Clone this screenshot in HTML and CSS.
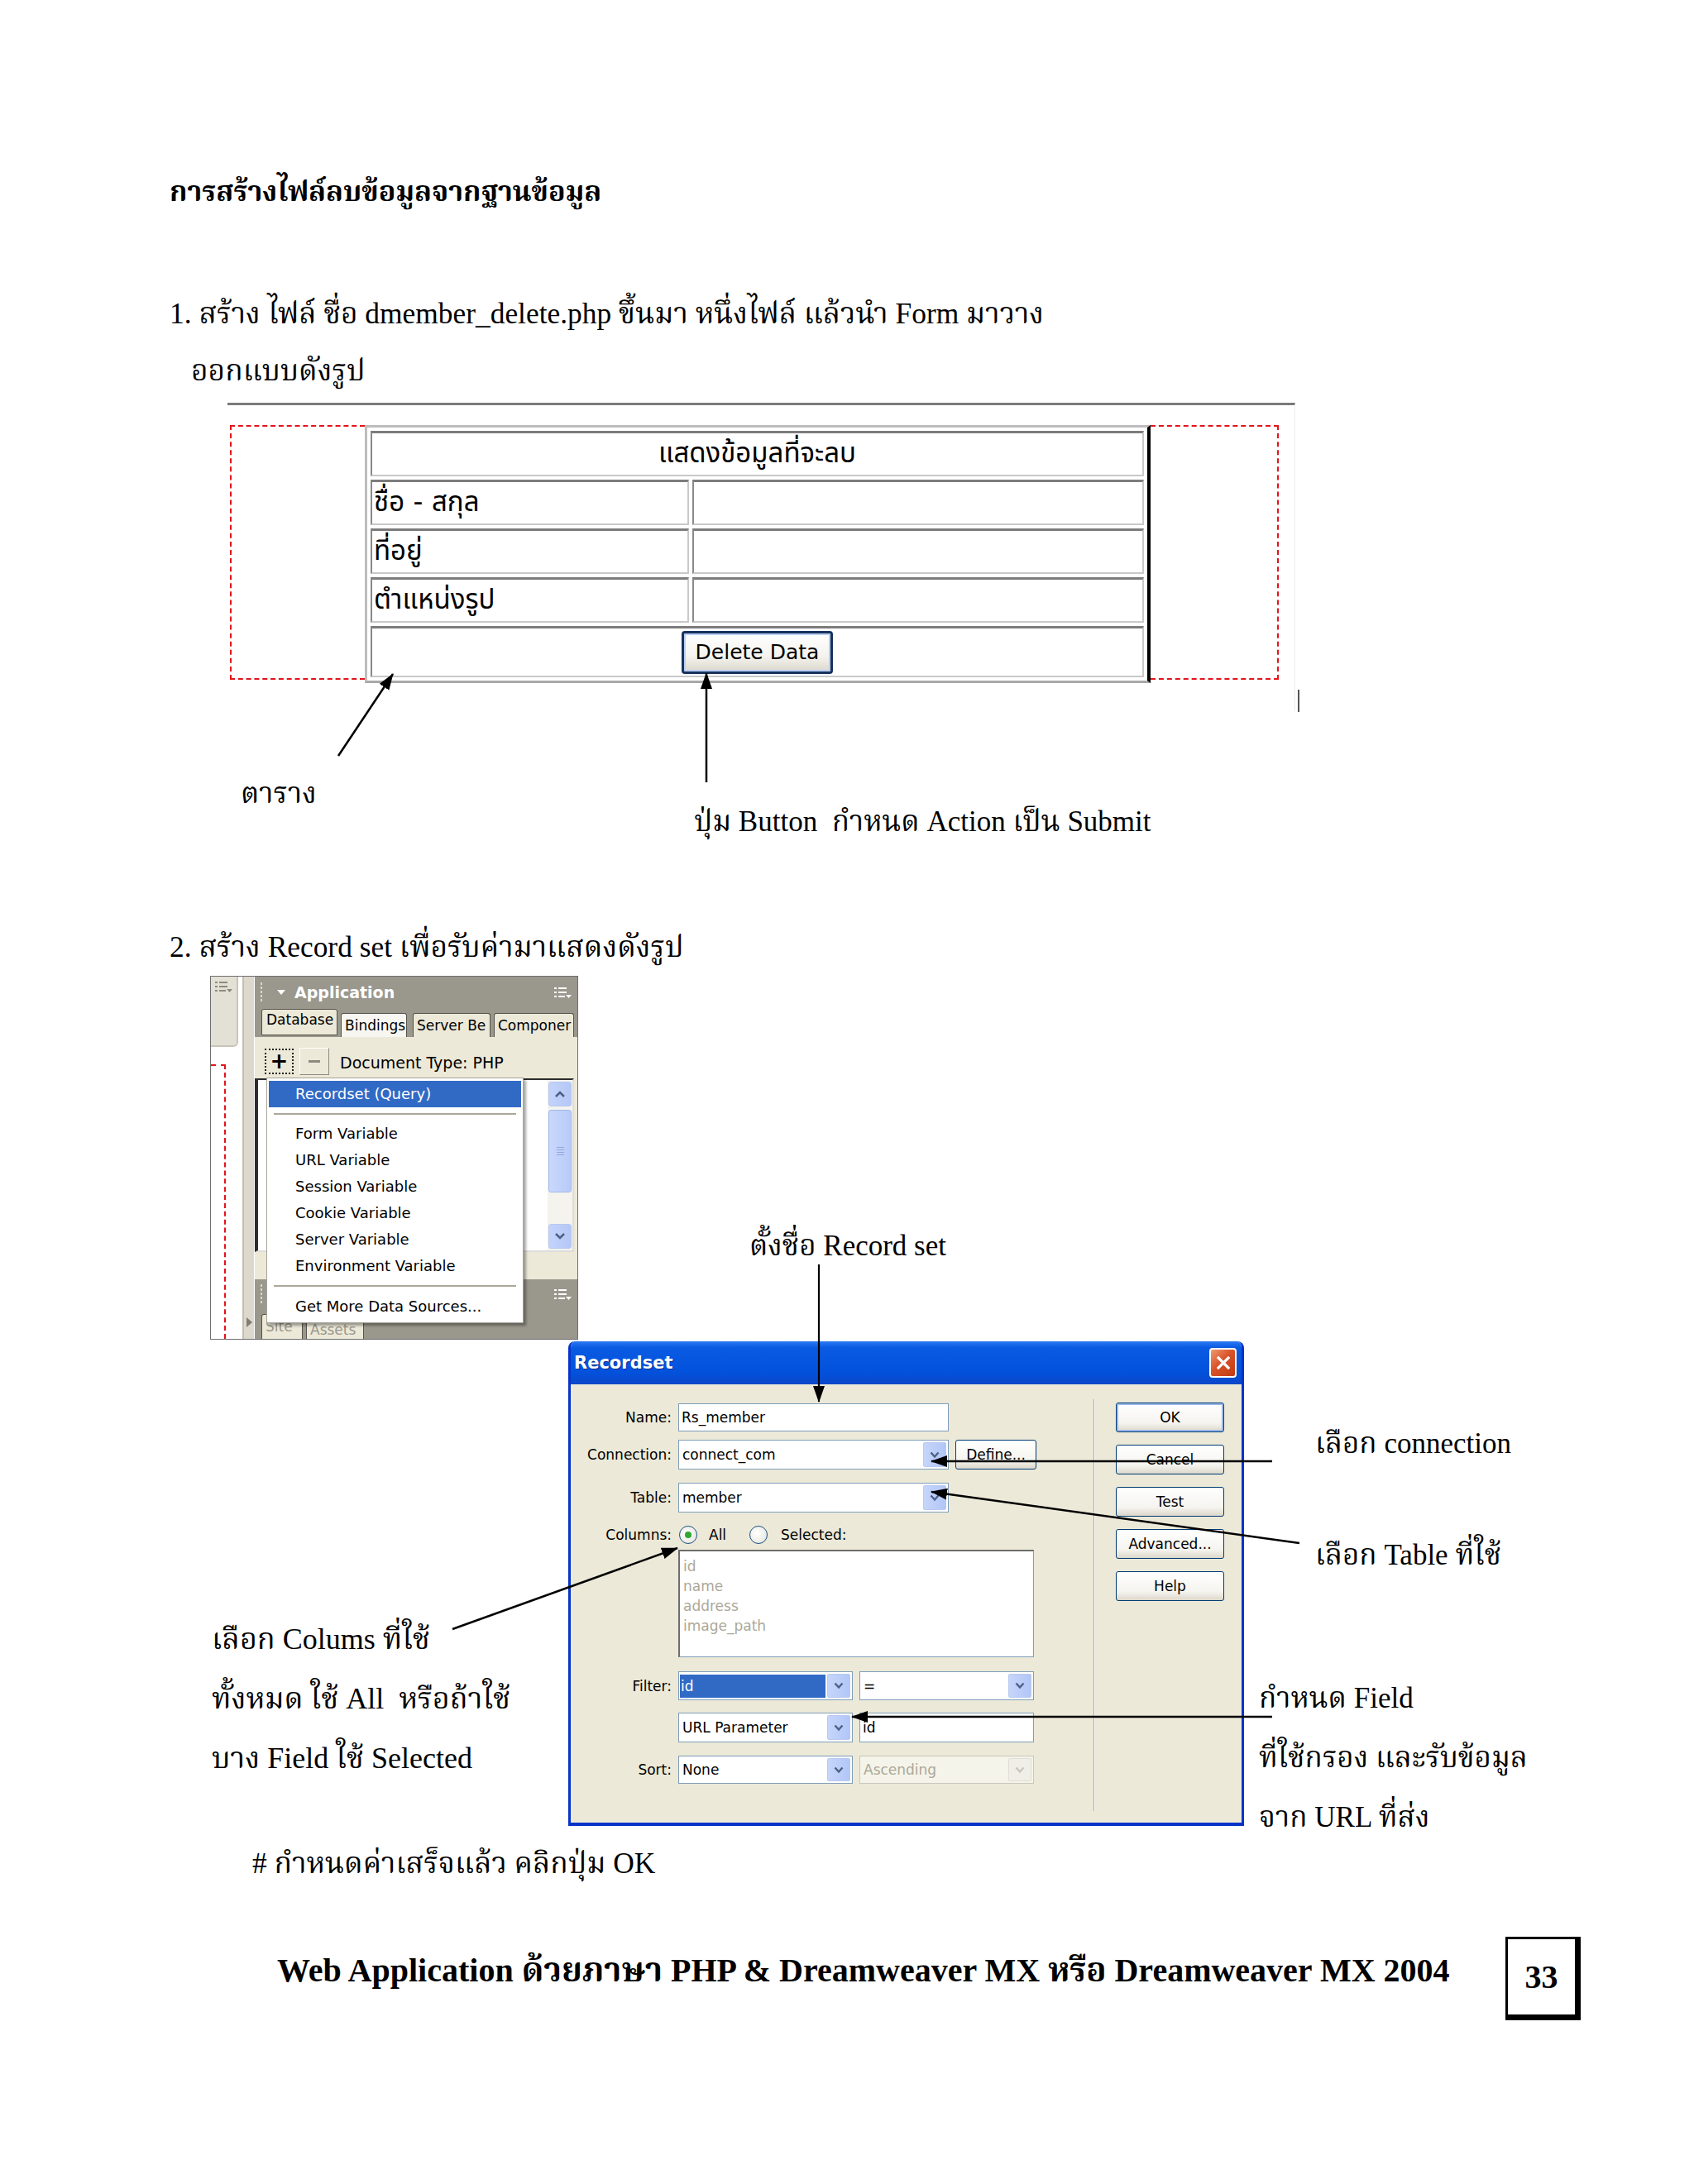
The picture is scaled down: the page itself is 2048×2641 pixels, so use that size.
FILE: index.html
```html
<!DOCTYPE html>
<html lang="th">
<head>
<meta charset="utf-8">
<title>การสร้างไฟล์ลบข้อมูลจากฐานข้อมูล</title>
<link rel="stylesheet" href="styles.css">
</head>
<body>
<div class="page">
  <h1 class="title">การสร้างไฟล์ลบข้อมูลจากฐานข้อมูล</h1>
  <p class="step">1. สร้าง ไฟล์ ชื่อ dmember_delete.php ขึ้นมา หนึ่งไฟล์ แล้วนำ Form มาวาง</p>
  <p class="step cont">ออกแบบดังรูป</p>

  <div class="fig fig1">
    <div class="shot1">
      <div class="redbox">
        <div class="dash dash-l"></div>
        <table class="dtable">
          <tr><td colspan="2" class="head">แสดงข้อมูลที่จะลบ</td></tr>
          <tr><td class="c1">ชื่อ - สกุล</td><td></td></tr>
          <tr><td class="c1">ที่อยู่</td><td></td></tr>
          <tr><td class="c1">ตำแหน่งรูป</td><td></td></tr>
          <tr class="last"><td colspan="2"><span class="xpbtn">Delete Data</span></td></tr>
        </table>
        <div class="dash dash-r"></div>
      </div>
    </div>
    <svg class="overlay" width="1400" height="543" viewBox="0 0 1400 543">
      <defs>
        <marker id="ah1" markerUnits="userSpaceOnUse" markerWidth="20" markerHeight="16" refX="19" refY="8" orient="auto">
          <path d="M0,1 L20,8 L0,15 Z" fill="#000"/>
        </marker>
      </defs>
      <line x1="204" y1="427" x2="270" y2="328" stroke="#000" stroke-width="2.5" marker-end="url(#ah1)"/>
      <line x1="649" y1="459" x2="649" y2="327" stroke="#000" stroke-width="2.5" marker-end="url(#ah1)"/>
    </svg>
    <span class="note n-table">ตาราง</span>
    <span class="note n-btn">ปุ่ม Button&nbsp; กำหนด Action เป็น Submit</span>
  </div>

  <p class="step step2">2. สร้าง Record set เพื่อรับค่ามาแสดงดังรูป</p>

  <div class="fig fig2">
    <div class="dw">
      <div class="dw-left">
        <div class="dw-doc">
          <div class="dw-doctab">
            <svg class="mico" width="22" height="16" viewBox="0 0 22 16"><rect x="1" y="2" width="3" height="2"/><rect x="6" y="2" width="10" height="2"/><rect x="1" y="7" width="3" height="2"/><rect x="6" y="7" width="10" height="2"/><rect x="1" y="12" width="3" height="2"/><rect x="6" y="12" width="8" height="2"/><path d="M15 11 h7 l-3.5 4z"/></svg>
          </div>
          <div class="dw-docpage"></div>
        </div>
        <div class="dw-split"><span class="split-tri"></span></div>
      </div>
      <div class="dw-app">
        <div class="app-bar">
          <span class="grip"></span>
          <span class="tri"></span>
          <span class="app-name">Application</span>
          <svg class="mico" width="22" height="16" viewBox="0 0 22 16"><rect x="1" y="2" width="3" height="2"/><rect x="6" y="2" width="10" height="2"/><rect x="1" y="7" width="3" height="2"/><rect x="6" y="7" width="10" height="2"/><rect x="1" y="12" width="3" height="2"/><rect x="6" y="12" width="8" height="2"/><path d="M15 11 h7 l-3.5 4z"/></svg>
        </div>
        <div class="app-tabs">
          <span class="tab t-db">Database</span>
          <span class="tab t-bind">Bindings</span>
          <span class="tab t-srv">Server Be</span>
          <span class="tab t-cmp">Componer</span>
        </div>
        <div class="app-body">
          <div class="app-tools">
            <span class="tb plus">+</span>
            <span class="tb minus"></span>
            <span class="doctype">Document Type: PHP</span>
          </div>
          <div class="app-list">
            <div class="sbar">
              <span class="sbtn"><svg width="14" height="10" viewBox="0 0 14 10"><path d="M2 8 L7 3 L12 8" fill="none" stroke="#4d6185" stroke-width="2.5"/></svg></span>
              <span class="sthumb"><i></i><i></i><i></i><i></i></span>
              <span class="strack"></span>
              <span class="sbtn"><svg width="14" height="10" viewBox="0 0 14 10"><path d="M2 2 L7 7 L12 2" fill="none" stroke="#4d6185" stroke-width="2.5"/></svg></span>
            </div>
          </div>
        </div>
        <div class="app-bar bar2">
          <span class="grip"></span>
          <span class="bar-fill"></span>
          <svg class="mico" width="22" height="16" viewBox="0 0 22 16"><rect x="1" y="2" width="3" height="2"/><rect x="6" y="2" width="10" height="2"/><rect x="1" y="7" width="3" height="2"/><rect x="6" y="7" width="10" height="2"/><rect x="1" y="12" width="3" height="2"/><rect x="6" y="12" width="8" height="2"/><path d="M15 11 h7 l-3.5 4z"/></svg>
        </div>
        <div class="app-tabs tabs2">
          <span class="tab t-low">Site</span>
          <span class="tab t-low2">Assets</span>
        </div>
      </div>
      <div class="menu">
        <div class="mi hi">Recordset (Query)</div>
        <div class="msep"></div>
        <div class="mi">Form Variable</div>
        <div class="mi">URL Variable</div>
        <div class="mi">Session Variable</div>
        <div class="mi">Cookie Variable</div>
        <div class="mi">Server Variable</div>
        <div class="mi">Environment Variable</div>
        <div class="msep"></div>
        <div class="mi more">Get More Data Sources...</div>
      </div>
    </div>

    <div class="dlg">
      <div class="dlg-title">
        <span class="dlg-name">Recordset</span>
        <span class="dlg-close"><svg width="20" height="20" viewBox="0 0 20 20"><path d="M4 4 L16 16 M16 4 L4 16" stroke="#fff" stroke-width="3.2" stroke-linecap="square"/></svg></span>
      </div>
      <div class="dlg-body">
        <div class="form">
          <div class="row r-name"><span class="lbl">Name:</span><span class="inp w327">Rs_member</span></div>
          <div class="row r-conn"><span class="lbl">Connection:</span><span class="sel w327"><span class="val">connect_com</span><span class="drop"><svg width="12" height="9" viewBox="0 0 12 9"><path d="M1.5 1.5 L6 6.5 L10.5 1.5" fill="none" stroke="#4d6185" stroke-width="2.4"/></svg></span></span><span class="pbtn define">Define...</span></div>
          <div class="row r-table"><span class="lbl">Table:</span><span class="sel w327"><span class="val">member</span><span class="drop"><svg width="12" height="9" viewBox="0 0 12 9"><path d="M1.5 1.5 L6 6.5 L10.5 1.5" fill="none" stroke="#4d6185" stroke-width="2.4"/></svg></span></span></div>
          <div class="row r-cols"><span class="lbl">Columns:</span><span class="radio on"></span><span class="rtxt">All</span><span class="radio"></span><span class="rtxt rtxt2">Selected:</span></div>
          <div class="row r-list"><span class="lbl"></span><div class="lbox"><div>id</div><div>name</div><div>address</div><div>image_path</div></div></div>
          <div class="row r-filter"><span class="lbl">Filter:</span><span class="sel w211"><span class="val"><span class="hl">id</span></span><span class="drop"><svg width="12" height="9" viewBox="0 0 12 9"><path d="M1.5 1.5 L6 6.5 L10.5 1.5" fill="none" stroke="#4d6185" stroke-width="2.4"/></svg></span></span><span class="sel w211"><span class="val">=</span><span class="drop"><svg width="12" height="9" viewBox="0 0 12 9"><path d="M1.5 1.5 L6 6.5 L10.5 1.5" fill="none" stroke="#4d6185" stroke-width="2.4"/></svg></span></span></div>
          <div class="row r-url"><span class="lbl"></span><span class="sel w211"><span class="val">URL Parameter</span><span class="drop"><svg width="12" height="9" viewBox="0 0 12 9"><path d="M1.5 1.5 L6 6.5 L10.5 1.5" fill="none" stroke="#4d6185" stroke-width="2.4"/></svg></span></span><span class="inp w211">id</span></div>
          <div class="row r-sort"><span class="lbl">Sort:</span><span class="sel w211"><span class="val">None</span><span class="drop"><svg width="12" height="9" viewBox="0 0 12 9"><path d="M1.5 1.5 L6 6.5 L10.5 1.5" fill="none" stroke="#4d6185" stroke-width="2.4"/></svg></span></span><span class="sel w211 off"><span class="val">Ascending</span><span class="drop"><svg width="12" height="9" viewBox="0 0 12 9"><path d="M1.5 1.5 L6 6.5 L10.5 1.5" fill="none" stroke="#c9c7ba" stroke-width="2.4"/></svg></span></span></div>
        </div>
        <div class="vsep"></div>
        <div class="btns">
          <span class="pbtn dflt">OK</span>
          <span class="pbtn">Cancel</span>
          <span class="pbtn">Test</span>
          <span class="pbtn">Advanced...</span>
          <span class="pbtn">Help</span>
        </div>
      </div>
    </div>

    <svg class="overlay ov2" width="1500" height="1030" viewBox="0 0 1500 1030">
      <defs>
        <marker id="ah2" markerUnits="userSpaceOnUse" markerWidth="20" markerHeight="16" refX="19" refY="8" orient="auto">
          <path d="M0,1 L20,8 L0,15 Z" fill="#000"/>
        </marker>
      </defs>
      <line x1="785" y1="349" x2="785" y2="515" stroke="#000" stroke-width="2.2" marker-end="url(#ah2)"/>
      <line x1="1333" y1="587" x2="921" y2="587" stroke="#000" stroke-width="2.5" marker-end="url(#ah2)"/>
      <line x1="1366" y1="686" x2="921" y2="624" stroke="#000" stroke-width="2.5" marker-end="url(#ah2)"/>
      <line x1="342" y1="790" x2="614" y2="692" stroke="#000" stroke-width="2.5" marker-end="url(#ah2)"/>
      <line x1="1333" y1="896" x2="825" y2="896" stroke="#000" stroke-width="2.5" marker-end="url(#ah2)"/>
    </svg>
    <span class="note n-name">ตั้งชื่อ Record set</span>
    <span class="note rn n-conn">เลือก connection</span>
    <span class="note rn n-tbl">เลือก Table ที่ใช้</span>
    <div class="note nblock n-cols">เลือก Colums ที่ใช้<br>ทั้งหมด ใช้ All&nbsp; หรือถ้าใช้<br>บาง Field ใช้ Selected</div>
    <div class="note nblock rn n-field">กำหนด Field<br>ที่ใช้กรอง และรับข้อมูล<br>จาก URL ที่ส่ง</div>
  </div>

  <p class="hint"># กำหนดค่าเสร็จแล้ว คลิกปุ่ม OK</p>

  <footer class="foot">
    <span class="foot-text">Web Application ด้วยภาษา PHP &amp; Dreamweaver MX หรือ Dreamweaver MX 2004</span>
    <span class="pnum">33</span>
  </footer>
</div>
</body>
</html>
```

FILE: styles.css
```css
* { box-sizing: border-box; }
html, body { margin: 0; background: #fff; }
body {
  width: 2048px;
  min-height: 2641px;
  color: #000;
  font-family: "Liberation Serif", "Noto Serif Thai", "Noto Sans Thai", "Garuda", "Norasi", "Loma", serif;
}
.page { padding: 202px 0 0 205px; }

.title { margin: 0; height: 60px; line-height: 60px; font-size: 34px; font-weight: bold; white-space: nowrap; }
.step { margin: 87px 0 0; height: 60px; line-height: 60px; font-size: 35.4px; white-space: nowrap; }
.cont { margin-top: 9px; padding-left: 26px; }
.step2 { margin-top: 85px; }

.fig { position: relative; }
.overlay { position: absolute; left: 0; top: 0; pointer-events: none; z-index: 5; }
.note { position: absolute; white-space: nowrap; font-size: 35px; line-height: 60px; z-index: 6; }

/* ---------- figure 1 ---------- */
.fig1 { margin-top: 9px; height: 543px; }
.shot1 {
  position: relative;
  margin-left: 70px;
  width: 1291px;
  height: 373px;
  border-top: 3px solid #7a7a7a;
  border-right: 1px solid #ececec;
  padding: 24px 0 0 3px;
}
.shot1::after {
  content: "";
  position: absolute;
  right: -6px;
  top: 344px;
  width: 2px;
  height: 27px;
  background: #555;
}
.redbox { display: flex; width: 1268px; height: 308px; }
.dash { border: 2px dashed #e3141b; }
.dash-l { width: 163px; border-right: 0; }
.dash-r { width: 155px; border-left: 0; }
.dtable {
  width: 950px;
  height: 308px;
  border-collapse: separate;
  border-spacing: 4px;
  border-top: 3px solid #bdbdbd;
  border-left: 3px solid #bdbdbd;
  border-bottom: 3px solid #a8a8a8;
  border-right: 4px solid #000;
  background: #fff;
  font-family: "DejaVu Sans", "Noto Sans Thai", "Loma", "Garuda", sans-serif;
  font-size: 33px;
}
.dtable td {
  height: 54px;
  padding: 0 2px;
  border-top: 3px solid #7c7c7c;
  border-left: 2px solid #8a8a8a;
  border-bottom: 2px solid #c9c9c9;
  border-right: 2px solid #c9c9c9;
}
.dtable .c1 { width: 385px; }
.dtable .head { text-align: center; }
.dtable .last td { height: 62px; text-align: center; }
.xpbtn {
  display: inline-flex;
  align-items: center;
  justify-content: center;
  width: 183px;
  height: 52px;
  border: 3px solid #17325c;
  border-radius: 4px;
  background: linear-gradient(#ffffff, #f4f3ee 60%, #dcd8cc);
  box-shadow: inset 0 0 0 2px #b9cff3;
  font-family: "DejaVu Sans", sans-serif;
  font-size: 25px;
  vertical-align: middle;
}
.n-table { left: 86px; top: 443px; }
.n-btn { left: 634px; top: 477px; }

/* ---------- Dreamweaver panel ---------- */
.fig2 { margin-top: 5px; }
.dw {
  position: relative;
  margin-left: 49px;
  width: 445px;
  height: 440px;
  border: 1px solid #6f6f6f;
  display: flex;
  font-family: "DejaVu Sans", sans-serif;
  font-size: 17px;
}
.mico { fill: #fff; flex: none; }
.dw-left { width: 53px; display: flex; }
.dw-doc { width: 38px; display: flex; flex-direction: column; background: #fff; }
.dw-doctab {
  height: 85px;
  width: 33px;
  background: #e3e0d6;
  border-bottom: 2px solid #c9c5b8;
  border-right: 2px solid #c9c5b8;
  border-bottom-right-radius: 6px;
  padding: 4px 0 0 4px;
}
.dw-doctab .mico { fill: #8d8a80; }
.dw-docpage {
  flex: 1;
  margin-top: 21px;
  width: 18px;
  border-top: 2px dashed #e3141b;
  border-right: 2px dashed #e3141b;
}
.dw-split {
  position: relative;
  width: 15px;
  background: #dcd8cc;
  border-left: 2px solid #c2beb1;
  border-right: 1px solid #fff;
}
.split-tri {
  position: absolute;
  left: 3px;
  bottom: 14px;
  border-left: 7px solid #807d74;
  border-top: 6px solid transparent;
  border-bottom: 6px solid transparent;
}
.dw-app { flex: 1; display: flex; flex-direction: column; background: #ece9d8; }
.app-bar {
  height: 37px;
  background: #9a978d;
  display: flex;
  align-items: center;
  padding: 0 7px 0 6px;
  color: #fff;
}
.grip {
  width: 4px;
  height: 26px;
  background-image: radial-gradient(circle, #d9d6cc 1.2px, transparent 1.5px);
  background-size: 4px 5px;
  margin-right: 17px;
}
.tri {
  width: 0; height: 0;
  border-left: 5px solid transparent;
  border-right: 5px solid transparent;
  border-top: 6px solid #fff;
  margin-right: 11px;
}
.app-name { flex: 1; font-weight: bold; font-size: 19px; }
.bar-fill { flex: 1; }
.app-tabs {
  height: 36px;
  background: #9a978d;
  display: flex;
  align-items: flex-end;
  padding-left: 8px;
  gap: 4px;
  overflow: hidden;
}
.tab {
  height: 29px;
  line-height: 28px;
  padding-left: 4px;
  background: #ece9d8;
  border: 1px solid #55534b;
  border-bottom: 0;
  border-radius: 3px 3px 0 0;
  white-space: nowrap;
  overflow: hidden;
  font-size: 17px;
}
.t-db { width: 92px; height: 32px; line-height: 24px; align-self: flex-start; margin-top: 2px; border-bottom: 1px solid #55534b; padding-left: 5px; }
.t-bind { width: 80px; background: #f7f6f1; }
.t-srv { width: 94px; margin-left: 3px; }
.t-cmp { width: 97px; }
.app-body { height: 293px; padding: 12px 4px 0 0; }
.app-tools { display: flex; align-items: center; height: 34px; padding-left: 12px; }
.tb {
  width: 35px; height: 31px;
  display: flex; align-items: center; justify-content: center;
  font-size: 26px; font-weight: bold; line-height: 1;
}
.plus { border: 2px dotted #222; background: #ece9d8; }
.minus {
  margin-left: 7px;
  width: 36px;
  height: 33px;
  border: 1px solid;
  border-color: #fff #8d8a80 #8d8a80 #fff;
}
.minus::before { content: ""; width: 14px; height: 3px; background: #8d8a80; }
.doctype { margin-left: 13px; font-size: 19px; padding-top: 4px; }
.app-list {
  margin-top: 4px;
  height: 210px;
  border: 2px solid #2c2c2c;
  border-left-width: 4px;
  border-right-color: #ddd;
  border-bottom-color: #ddd;
  background: #fff;
  display: flex;
  justify-content: flex-end;
}
.sbar { width: 30px; display: flex; flex-direction: column; padding: 2px 1px; background: #f4f3ee; }
.sbtn {
  height: 30px;
  border: 1px solid #b7c8f0;
  border-radius: 3px;
  background: linear-gradient(90deg, #c4d3fb, #b4c7f6);
  display: flex; align-items: center; justify-content: center;
}
.sthumb {
  margin-top: 4px;
  height: 100px;
  border: 1px solid #a2b8ea;
  border-radius: 3px;
  background: linear-gradient(90deg, #c9d8fc, #b8cbf8);
  display: flex; flex-direction: column; align-items: center; justify-content: center; gap: 2px;
}
.sthumb i { display: block; width: 9px; height: 1px; background: #eef3ff; border-bottom: 1px solid #8da6dc; }
.strack { flex: 1; }
.bar2 { height: 35px; }
.tabs2 { height: 37px; }
.t-low { width: 50px; height: 30px; color: #9a978d; }
.t-low2 { width: 70px; height: 26px; color: #9a978d; }

.menu {
  position: absolute;
  left: 67px;
  top: 122px;
  width: 311px;
  height: 297px;
  background: #fff;
  border: 1px solid #a7a49a;
  box-shadow: 3px 3px 3px rgba(0,0,0,0.35);
  padding: 3px 2px 0 2px;
  z-index: 3;
}
.mi { height: 32px; line-height: 32px; padding-left: 32px; font-size: 18px; white-space: nowrap; }
.mi.hi { background: #316ac5; color: #fff; }
.msep { height: 16px; position: relative; }
.msep::after { content: ""; position: absolute; left: 6px; right: 6px; top: 7px; height: 2px; background: #aca899; }
.mi.more { height: 34px; line-height: 34px; }

/* ---------- Recordset dialog ---------- */
.dlg {
  margin: 2px 0 0 482px;
  width: 817px;
  height: 586px;
  display: flex;
  flex-direction: column;
  border: 3px solid #0733c8;
  border-top: 0;
  border-bottom-width: 4px;
  border-radius: 8px 8px 0 0;
  overflow: hidden;
  font-family: "DejaVu Sans", sans-serif;
  font-size: 17px;
  position: relative;
  z-index: 1;
}
.dlg-title {
  height: 52px;
  flex: none;
  display: flex;
  align-items: center;
  padding: 0 6px 0 4px;
  background: linear-gradient(#2c7af3, #0a5ae2 15%, #0352dd 70%, #0a47c9);
}
.dlg-name { flex: 1; color: #fff; font-weight: bold; font-size: 21px; text-shadow: 1px 1px 0 #0b2a86; }
.dlg-close {
  width: 33px; height: 36px;
  border: 2px solid #fff;
  border-radius: 4px;
  background: linear-gradient(135deg, #ef9a72, #d9532a 45%, #c13a10);
  display: flex; align-items: center; justify-content: center;
}
.dlg-body { flex: 1; display: flex; background: #ece9d8; }
.form { width: 632px; padding-top: 23px; }
.row { display: flex; align-items: center; gap: 8px; }
.lbl { width: 122px; text-align: right; flex: none; }
.r-name { height: 34px; margin-bottom: 10px; }
.r-conn { height: 36px; margin-bottom: 16px; }
.r-table { height: 36px; margin-bottom: 16px; }
.r-cols { height: 22px; margin-bottom: 7px; gap: 0; }
.r-cols .lbl { margin-right: 9px; }
.r-list { height: 130px; margin-bottom: 17px; }
.r-filter { height: 35px; margin-bottom: 15px; }
.r-url { height: 36px; margin-bottom: 16px; }
.r-sort { height: 34px; }
.inp, .sel {
  height: 100%;
  border: 1px solid #7f9db9;
  background: #fff;
  display: flex;
  align-items: center;
  white-space: nowrap;
  overflow: hidden;
}
.inp { padding-left: 3px; }
.w327 { width: 327px; }
.w211 { width: 211px; }
.sel .val { flex: 1; padding-left: 4px; }
.drop {
  width: 28px;
  align-self: stretch;
  margin: 2px;
  border-radius: 2px;
  border: 1px solid #b9c9ef;
  background: linear-gradient(90deg, #c6d5fb, #b2c6f6);
  display: flex; align-items: center; justify-content: center;
}
.hl { display: inline-block; width: 176px; background: #316ac5; color: #fff; padding-left: 1px; margin-left: -3px; line-height: 28px; }
.sel.off { background: #f5f4ea; border-color: #c9c7ba; color: #aca899; }
.sel.off .drop { background: #f0efe7; border-color: #e0ded4; }
.radio {
  width: 22px; height: 22px;
  border-radius: 50%;
  border: 1px solid #1c5180;
  background: radial-gradient(circle at 40% 40%, #fff, #e3e2da);
  position: relative;
  flex: none;
}
.radio.on::after {
  content: "";
  position: absolute;
  left: 6px; top: 6px;
  width: 8px; height: 8px;
  border-radius: 50%;
  background: #2fa82f;
}
.rtxt { margin: 0 28px 0 14px; }
.rtxt2 { margin: 0 0 0 16px; }
.lbox {
  width: 430px;
  height: 100%;
  border: 1px solid #7f9db9;
  border-left: 2px solid #6d6d6d;
  border-top: 2px solid #6d6d6d;
  background: #fff;
  padding: 6px 4px;
  color: #aca899;
  line-height: 24px;
}
.vsep {
  margin: 18px 0 14px;
  width: 2px;
  border-left: 1px solid #aca899;
  border-right: 1px solid #fff;
}
.btns { padding: 22px 0 0 25px; display: flex; flex-direction: column; gap: 15px; }
.pbtn {
  width: 131px;
  height: 36px;
  border: 1px solid #003c74;
  border-radius: 3px;
  background: linear-gradient(#ffffff, #f5f4ef 70%, #dcd7cb);
  display: flex; align-items: center; justify-content: center;
  white-space: nowrap;
}
.pbtn.dflt { box-shadow: inset 0 0 0 2px #9bb7ea; }
.define { width: 98px; height: 100%; }

.n-name { left: 701px; top: 297px; }
.n-conn { left: 1385px; top: 536px; }
.n-tbl { left: 1385px; top: 671px; }
.nblock { line-height: 72px; }
.n-cols { left: 51px; top: 766px; font-size: 36px; }
.n-field { left: 1317px; top: 838px; }

.hint { margin: 15px 0 0; height: 60px; line-height: 60px; padding-left: 100px; font-size: 35.4px; white-space: nowrap; }

.foot {
  margin-top: 59px;
  width: 1706px;
  display: flex;
  align-items: center;
  padding-left: 130px;
}
.foot-text { font-weight: bold; font-size: 40px; white-space: nowrap; padding-bottom: 16px; }
.pnum {
  margin-left: auto;
  width: 91px;
  height: 101px;
  border: 3px solid #000;
  border-right-width: 7px;
  border-bottom-width: 7px;
  display: flex; align-items: center; justify-content: center;
  font-weight: bold;
  font-size: 40px;
}
```
